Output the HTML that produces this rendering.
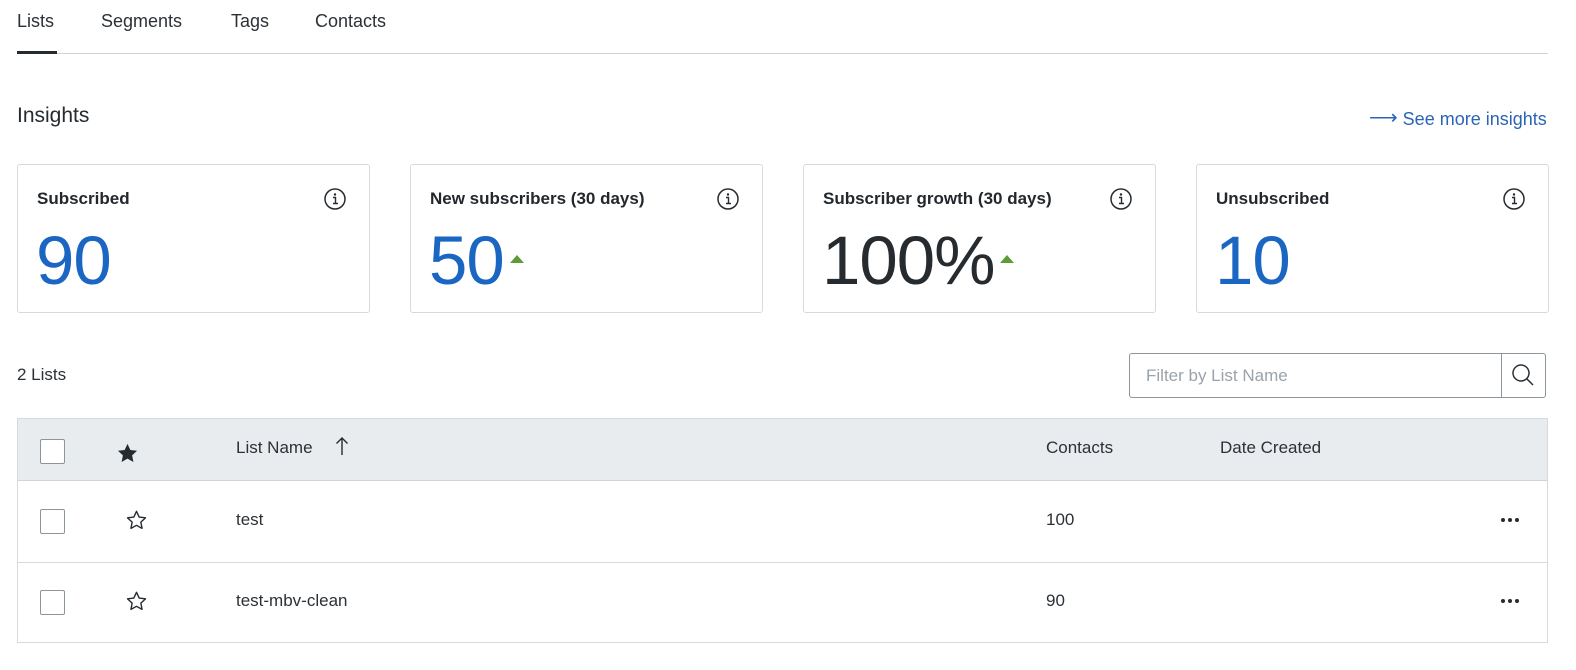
<!DOCTYPE html>
<html><head><meta charset="utf-8"><style>
*{box-sizing:border-box;margin:0;padding:0}
body{width:1576px;height:670px;background:#fff;font-family:"Liberation Sans",sans-serif;color:#262b30;position:relative;overflow:hidden}
.a{position:absolute;white-space:nowrap}
.tab{font-size:18px;top:11px;color:#2b3137}
.card{position:absolute;top:164px;width:353px;height:149px;border:1px solid #d6dadd;border-radius:3px}
.card .t{position:absolute;left:19px;top:24px;font-size:17px;font-weight:bold;color:#23282d}
.card .n{position:absolute;left:18px;top:56px;font-size:69px;color:#1a66c2;letter-spacing:-1px}
.card svg.i{position:absolute;left:306px;top:23px}
.tri{display:inline-block;width:0;height:0;border-left:7px solid transparent;border-right:7px solid transparent;border-bottom:8px solid #5e9b3a;vertical-align:top;margin-top:34px;margin-left:6px}
.cb{position:absolute;left:40px;width:25px;height:25px;border:1px solid #8d959c;border-radius:2px;background:#fff}
.cell{position:absolute;font-size:17px;color:#2b3137}
</style></head><body>
<div class="a tab" style="left:17px">Lists</div>
<div class="a tab" style="left:101px">Segments</div>
<div class="a tab" style="left:231px">Tags</div>
<div class="a tab" style="left:315px">Contacts</div>
<div class="a" style="left:17px;top:53px;width:1531px;height:1px;background:#d0d4d8"></div>
<div class="a" style="left:17px;top:51px;width:40px;height:3px;background:#262b30"></div>

<div class="a" style="left:17px;top:104px;font-size:21px;font-weight:500;color:#262b30">Insights</div>
<div class="a" style="left:1369px;top:106px;font-size:18px;color:#2c64b4"><span style="font-size:20px;position:relative;top:-1px">⟶</span> See more insights</div>

<div class="card" style="left:17px"><div class="t">Subscribed</div><svg class="i" width="22" height="22" viewBox="0 0 22 22"><circle cx="11" cy="11" r="10" fill="none" stroke="#262b30" stroke-width="1.5"/><circle cx="11" cy="6.5" r="1.2" fill="#262b30"/><path d="M9 9.5h2.5v6M9 15.5h5" stroke="#262b30" stroke-width="1.4" fill="none"/></svg><div class="n">90</div></div>
<div class="card" style="left:410px"><div class="t">New subscribers (30 days)</div><svg class="i" width="22" height="22" viewBox="0 0 22 22"><circle cx="11" cy="11" r="10" fill="none" stroke="#262b30" stroke-width="1.5"/><circle cx="11" cy="6.5" r="1.2" fill="#262b30"/><path d="M9 9.5h2.5v6M9 15.5h5" stroke="#262b30" stroke-width="1.4" fill="none"/></svg><div class="n">50<span class="tri"></span></div></div>
<div class="card" style="left:803px"><div class="t">Subscriber growth (30 days)</div><svg class="i" width="22" height="22" viewBox="0 0 22 22"><circle cx="11" cy="11" r="10" fill="none" stroke="#262b30" stroke-width="1.5"/><circle cx="11" cy="6.5" r="1.2" fill="#262b30"/><path d="M9 9.5h2.5v6M9 15.5h5" stroke="#262b30" stroke-width="1.4" fill="none"/></svg><div class="n" style="color:#262b30">100%<span class="tri"></span></div></div>
<div class="card" style="left:1196px"><div class="t">Unsubscribed</div><svg class="i" width="22" height="22" viewBox="0 0 22 22"><circle cx="11" cy="11" r="10" fill="none" stroke="#262b30" stroke-width="1.5"/><circle cx="11" cy="6.5" r="1.2" fill="#262b30"/><path d="M9 9.5h2.5v6M9 15.5h5" stroke="#262b30" stroke-width="1.4" fill="none"/></svg><div class="n">10</div></div>

<div class="a" style="left:17px;top:365px;font-size:17px;color:#2b3137">2 Lists</div>
<div class="a" style="left:1129px;top:353px;width:417px;height:45px;border:1px solid #8d959c;border-radius:3px"></div>
<div class="a" style="left:1501px;top:354px;width:1px;height:43px;background:#8d959c"></div>
<div class="a" style="left:1146px;top:366px;font-size:17px;color:#9aa3aa">Filter by List Name</div>
<svg class="a" style="left:1511px;top:363px" width="24" height="24" viewBox="0 0 24 24"><circle cx="10" cy="10" r="8" fill="none" stroke="#2b3137" stroke-width="1.5"/><path d="M15.8 15.8L22 22" stroke="#2b3137" stroke-width="1.5"/></svg>

<div class="a" style="left:17px;top:418px;width:1531px;height:225px;border:1px solid #d6dadd"></div>
<div class="a" style="left:18px;top:419px;width:1529px;height:62px;background:#e9ecef;border-bottom:1px solid #cfd4d8"></div>
<div class="a" style="left:18px;top:562px;width:1529px;height:1px;background:#d6dadd"></div>
<div class="cb" style="top:439px"></div>
<div class="cb" style="top:509px"></div>
<div class="cb" style="top:590px"></div>
<svg class="a" style="left:117px;top:443px" width="21" height="20" viewBox="0 0 24 23"><path d="M12 1l3.3 7 7.7.9-5.7 5.3 1.5 7.6L12 18l-6.8 3.8 1.5-7.6L1 8.9 8.7 8z" fill="#262b30"/></svg>
<svg class="a" style="left:126px;top:510px" width="21" height="20" viewBox="0 0 24 23"><path d="M12 1.5l3.1 6.6 7.2.9-5.3 5 1.4 7.1L12 17.6l-6.4 3.5 1.4-7.1-5.3-5 7.2-.9z" fill="none" stroke="#262b30" stroke-width="1.6" stroke-linejoin="round"/></svg>
<svg class="a" style="left:126px;top:591px" width="21" height="20" viewBox="0 0 24 23"><path d="M12 1.5l3.1 6.6 7.2.9-5.3 5 1.4 7.1L12 17.6l-6.4 3.5 1.4-7.1-5.3-5 7.2-.9z" fill="none" stroke="#262b30" stroke-width="1.6" stroke-linejoin="round"/></svg>
<div class="cell" style="left:236px;top:438px;font-weight:500">List Name</div>
<svg class="a" style="left:335px;top:436px" width="14" height="20" viewBox="0 0 14 20"><path d="M7 19V2M1.5 7.5L7 2l5.5 5.5" fill="none" stroke="#262b30" stroke-width="1.4"/></svg>
<div class="cell" style="left:1046px;top:438px;font-weight:500">Contacts</div>
<div class="cell" style="left:1220px;top:438px;font-weight:500">Date Created</div>
<div class="cell" style="left:236px;top:510px">test</div>
<div class="cell" style="left:1046px;top:510px">100</div>
<div class="cell" style="left:236px;top:591px">test-mbv-clean</div>
<div class="cell" style="left:1046px;top:591px">90</div>
<svg class="a" style="left:1500px;top:517px" width="20" height="6"><circle cx="3" cy="3" r="2" fill="#262b30"/><circle cx="10" cy="3" r="2" fill="#262b30"/><circle cx="17" cy="3" r="2" fill="#262b30"/></svg>
<svg class="a" style="left:1500px;top:598px" width="20" height="6"><circle cx="3" cy="3" r="2" fill="#262b30"/><circle cx="10" cy="3" r="2" fill="#262b30"/><circle cx="17" cy="3" r="2" fill="#262b30"/></svg>
</body></html>
